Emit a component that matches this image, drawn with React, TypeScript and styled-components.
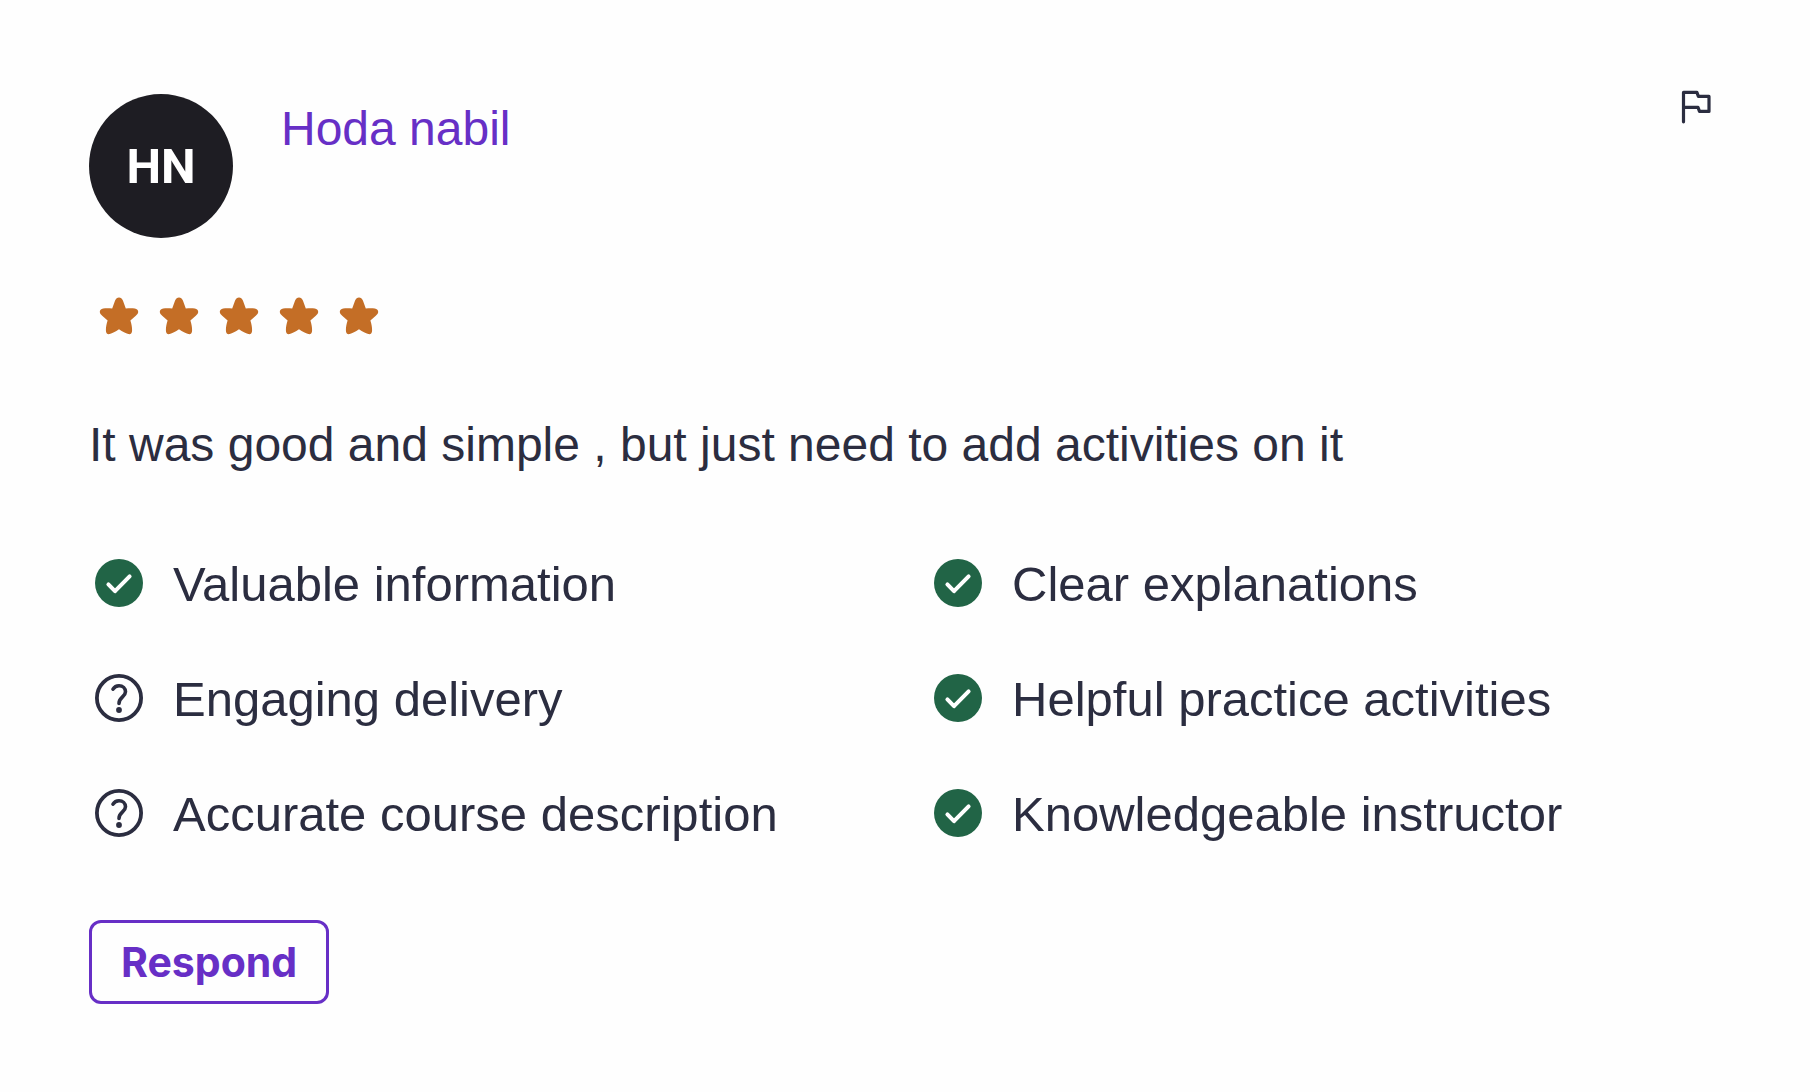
import React from "react";
import styled, { createGlobalStyle } from "styled-components";

const color = {
  text: "#2b2d40",
  link: "#672fc6",
  star: "#c46e26",
  success: "#216446",
  avatar: "#1e1d23",
  page: "#fefefe",
};

const sans = `"Liberation Sans", Arial, sans-serif`;

const GlobalStyle = createGlobalStyle`
  *, *::before, *::after { box-sizing: border-box; }
  body {
    margin: 0;
    background: ${color.page};
    color: ${color.text};
    font: 400 48px/70px ${sans};
  }
`;

const Review = styled.article`
  display: flex;
  flex-direction: column;
  align-items: stretch;
  padding: 83px 91px 88px 89px;
`;

const Header = styled.header`
  display: flex;
  align-items: flex-start;
  justify-content: space-between;
`;

const Person = styled.div`
  display: flex;
  align-items: flex-start;
  gap: 48px;
  padding-top: 11px;
`;

const Avatar = styled.div`
  display: flex;
  align-items: center;
  justify-content: center;
  width: 144px;
  height: 144px;
  border-radius: 50%;
  background: ${color.avatar};
  color: #fff;
  font: 700 49px/1 Roboto, ${sans};
`;

const NameLink = styled.a`
  color: ${color.link};
  text-decoration: none;
  &:hover { text-decoration: underline; }
`;

const FlagButton = styled.button`
  display: flex;
  padding: 0;
  border: 0;
  background: none;
  color: inherit;
  cursor: pointer;
`;

const Stars = styled.div`
  display: flex;
  margin-top: 48px;
`;

const Comment = styled.p`
  margin: 64px 0 71px;
`;

const Aspects = styled.ul`
  display: grid;
  grid-template-columns: 1fr 1fr;
  gap: 48px;
  margin: 0;
  padding: 0;
  list-style: none;
  font-size: 49px;
  line-height: 67px;
`;

const Aspect = styled.li`
  display: flex;
  align-items: flex-start;
  gap: 24px;
`;

const Icon = styled.svg`
  flex: none;
  display: block;
  fill: none;
  stroke-linecap: round;
  stroke-linejoin: round;
`;

const RespondButton = styled.button`
  align-self: flex-start;
  margin-top: 72px;
  padding: 0 29px;
  height: 84px;
  border: 3px solid ${color.link};
  border-radius: 12px;
  background: transparent;
  color: ${color.link};
  font: 700 41px/1 Inter, ${sans};
  cursor: pointer;
`;

function FlagIcon() {
  return (
    <Icon width="48" height="48" viewBox="0 0 48 48" stroke="currentColor" strokeWidth="3.2" aria-hidden="true">
      <path d="M12.5 38.8V9.4H25.9L27.4 13.4H38V28.4H28.5L27 24.4H12.5" />
    </Icon>
  );
}

function StarIcon() {
  return (
    <Icon width="60" height="60" viewBox="0 0 60 60" aria-hidden="true">
      <path
        fill={color.star}
        d="M30 11.4C31.8 11.4 33 12.6 33.9 14.6L36.8 22.4C40.2 22.2 43.3 22.1 45.8 22.5C48 22.9 49.3 24.3 49.2 26C49.1 27.4 48.2 28.6 46.8 29.7L41.4 34.4C42.5 37.8 43.1 40.9 43.1 44.2C43.1 47.2 41.6 48.6 39.3 48C36.6 47.3 33.7 45.8 30 43.2C26.3 45.8 23.4 47.3 20.7 48C18.4 48.6 16.9 47.2 16.9 44.2C16.9 40.9 17.5 37.8 18.6 34.4L13.2 29.7C11.8 28.6 10.9 27.4 10.8 26C10.7 24.3 12 22.9 14.2 22.5C16.7 22.1 19.8 22.2 23.2 22.4L26.1 14.6C27 12.6 28.2 11.4 30 11.4Z"
      />
    </Icon>
  );
}

function CheckIcon() {
  return (
    <Icon width="60" height="64" viewBox="0 0 60 64" role="img" aria-label="Yes">
      <circle cx="30" cy="32" r="24" fill={color.success} />
      <path d="M19.4 33.4L26 40.2L40.6 25.4" stroke="#fff" strokeWidth="4" />
    </Icon>
  );
}

function QuestionIcon() {
  return (
    <Icon width="60" height="64" viewBox="0 0 60 64" role="img" aria-label="Unsure" stroke={color.text}>
      <circle cx="30" cy="32" r="22.1" strokeWidth="3.8" />
      <path d="M24 23.2C25.2 21.1 27.4 19.7 30 19.7C33.8 19.7 36.5 22.4 36.5 25.8C36.5 30.8 30 31.2 30 37.4" strokeWidth="3.6" />
      <circle cx="30" cy="44" r="2.9" fill={color.text} stroke="none" />
    </Icon>
  );
}

const aspects = [
  { label: "Valuable information", met: true },
  { label: "Clear explanations", met: true },
  { label: "Engaging delivery", met: false },
  { label: "Helpful practice activities", met: true },
  { label: "Accurate course description", met: false },
  { label: "Knowledgeable instructor", met: true },
];

export default function App() {
  return (
    <>
      <GlobalStyle />
      <Review>
        <Header>
          <Person>
            <Avatar>HN</Avatar>
            <NameLink href="#">Hoda nabil</NameLink>
          </Person>
          <FlagButton type="button" aria-label="Report review">
            <FlagIcon />
          </FlagButton>
        </Header>
        <Stars role="img" aria-label="5 out of 5">
          {[1, 2, 3, 4, 5].map((n) => (
            <StarIcon key={n} />
          ))}
        </Stars>
        <Comment>It was good and simple , but just need to add activities on it</Comment>
        <Aspects>
          {aspects.map(({ label, met }) => (
            <Aspect key={label}>
              {met ? <CheckIcon /> : <QuestionIcon />}
              <span>{label}</span>
            </Aspect>
          ))}
        </Aspects>
        <RespondButton type="button">Respond</RespondButton>
      </Review>
    </>
  );
}
